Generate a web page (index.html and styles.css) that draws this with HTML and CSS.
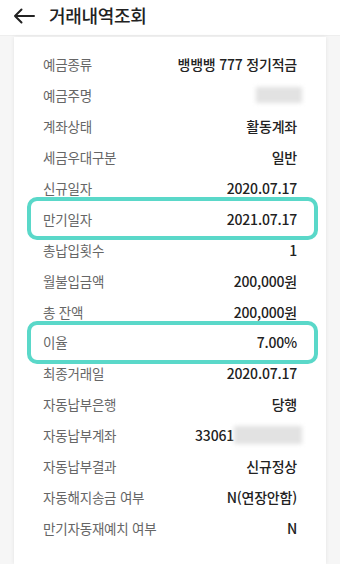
FILE: index.html
```html
<!DOCTYPE html>
<html lang="ko">
<head>
  <meta charset="UTF-8">
  <title>거래내역조회</title>
  <link rel="stylesheet" href="styles.css">
</head>
<body>
  <header class="topbar">
    <svg class="back" width="22" height="16" viewBox="0 0 22 16">
      <path d="M21 8H2M8.5 1.5L2 8l6.5 6.5" fill="none" stroke="#222" stroke-width="2" stroke-linecap="round" stroke-linejoin="round"/>
    </svg>
    <h1>거래내역조회</h1>
  </header>

  <main class="card">
    <div class="row"><span class="label">예금종류</span><span class="value">뱅뱅뱅 777 정기적금</span></div>
    <div class="row"><span class="label">예금주명</span><span class="value"><span class="blur name"></span></span></div>
    <div class="row"><span class="label">계좌상태</span><span class="value">활동계좌</span></div>
    <div class="row"><span class="label">세금우대구분</span><span class="value">일반</span></div>
    <div class="row"><span class="label">신규일자</span><span class="value">2020.07.17</span></div>
    <div class="row mark"><span class="label">만기일자</span><span class="value">2021.07.17</span></div>
    <div class="row"><span class="label">총납입횟수</span><span class="value">1</span></div>
    <div class="row"><span class="label">월불입금액</span><span class="value">200,000원</span></div>
    <div class="row"><span class="label">총 잔액</span><span class="value">200,000원</span></div>
    <div class="row mark"><span class="label">이율</span><span class="value">7.00%</span></div>
    <div class="row"><span class="label">최종거래일</span><span class="value">2020.07.17</span></div>
    <div class="row"><span class="label">자동납부은행</span><span class="value">당행</span></div>
    <div class="row"><span class="label">자동납부계좌</span><span class="value acct">33061<span class="blur acctno"></span></span></div>
    <div class="row"><span class="label">자동납부결과</span><span class="value">신규정상</span></div>
    <div class="row"><span class="label">자동해지송금 여부</span><span class="value">N(연장안함)</span></div>
    <div class="row"><span class="label">만기자동재예치 여부</span><span class="value">N</span></div>
  </main>
</body>
</html>
```

FILE: styles.css
```css
body {
  margin: 0;
  background: #f6f6f6;
  font-family: "Noto Sans CJK KR", "Noto Sans", sans-serif;
  color: #222;
  height: 564px;
  overflow: hidden;
}
.topbar {
  height: 36px;
  background: #fff;
  display: flex;
  align-items: center;
  padding-left: 13px;
  box-sizing: border-box;
  border-bottom: 1px solid #eee;
}
.back {
  margin-top: -4px;
}
.topbar h1 {
  margin: -5px 0 0 14px;
  font-size: 18px;
  font-weight: 500;
  letter-spacing: -0.3px;
}
.card {
  margin: 1px 14px 0;
  background: #fff;
  box-shadow: 0 0 4px rgba(0, 0, 0, 0.08);
  padding: 12px 8px 0 13px;
  box-sizing: border-box;
  min-height: 527px;
}
.row {
  position: relative;
  height: 30.9px;
  display: flex;
  align-items: center;
  justify-content: space-between;
  padding: 0 21px 0 16px;
  font-size: 13.5px;
  letter-spacing: -0.2px;
}
.label {
  color: #666;
}
.value {
  color: #222;
  font-size: 14px;
  font-weight: 500;
  display: flex;
  align-items: center;
}
.mark::before {
  content: "";
  position: absolute;
  top: -6px;
  bottom: -6px;
  left: 0;
  right: 0;
  border: 4px solid #5ad8c9;
  border-radius: 10px;
}
.blur {
  display: inline-block;
  background: #e2e2e2;
  filter: blur(2px);
}
.blur.name {
  width: 46px;
  height: 16px;
  margin-right: -5px;
}
.acct {
  margin-right: -5px;
}
.blur.acctno {
  width: 68px;
  height: 18px;
}
```
